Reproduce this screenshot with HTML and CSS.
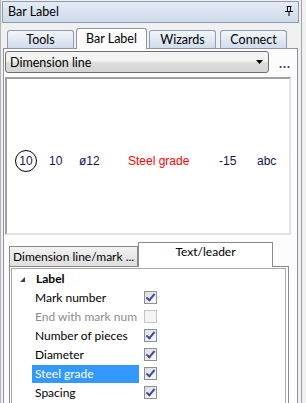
FILE: index.html
```html
<!DOCTYPE html>
<html lang="en">
<head>
    <meta charset="UTF-8">
    <title>Bar Label</title>
    <link rel="stylesheet" href="styles.css">
</head>
<body>
    <div class="window">
        <div class="titlebar">
            <span>Bar Label</span>
            <svg class="pin" width="8" height="10" viewBox="0 0 8 10">
                <path d="M1.5 0.5h5M2.5 0.5v5M5.5 0.5v5M0 5.5h8M4 5.5v4.5" stroke="#000" stroke-width="1" fill="none"/>
                <rect x="2" y="0" width="1" height="5" fill="#000"/>
            </svg>
        </div>

        <div class="tabs">
            <div class="tab">Tools</div>
            <div class="tab active">Bar Label</div>
            <div class="tab">Wizards</div>
            <div class="tab">Connect</div>
        </div>

        <div class="panel">
            <div class="combo-row">
                <div class="combo">
                    <span>Dimension line</span>
                    <svg width="7" height="4" viewBox="0 0 7 4"><path d="M0 0h7L3.5 4z" fill="#000"/></svg>
                </div>
                <span class="more">...</span>
            </div>

            <div class="preview">
                <div class="preview-row">
                    <span class="mark">10</span>
                    <span>10</span>
                    <span>ø12</span>
                    <span class="grade">Steel grade</span>
                    <span>-15</span>
                    <span>abc</span>
                </div>
            </div>

            <div class="subtabs">
                <div class="subtab">Dimension line/mark ...</div>
                <div class="subtab active">Text/leader</div>
            </div>

            <div class="grid">
                <div class="grid-inner">
                    <div class="row group">
                        <svg class="expander" width="5" height="5" viewBox="0 0 5 5"><path d="M5 0V5H0z" fill="#404040"/></svg>
                        <span>Label</span>
                    </div>
                    <div class="row">
                        <span class="name">Mark number</span>
                        <span class="check on"></span>
                    </div>
                    <div class="row disabled">
                        <span class="name">End with mark num</span>
                        <span class="check"></span>
                    </div>
                    <div class="row">
                        <span class="name">Number of pieces</span>
                        <span class="check on"></span>
                    </div>
                    <div class="row">
                        <span class="name">Diameter</span>
                        <span class="check on"></span>
                    </div>
                    <div class="row selected">
                        <span class="name">Steel grade</span>
                        <span class="check on"></span>
                    </div>
                    <div class="row">
                        <span class="name">Spacing</span>
                        <span class="check on"></span>
                    </div>
                </div>
            </div>
        </div>
    </div>
</body>
</html>
```

FILE: styles.css
```css
body {
    margin: 0;
    background: #f0f0f0;
    font-family: Lato, 'Noto Sans', sans-serif;
    font-size: 12.5px;
    color: #000;
    overflow: hidden;
}

.window {
    width: 302px;
    height: 403px;
    border-left: 1px solid #b4b4b4;
    border-right: 1px solid #a0a0a0;
    box-sizing: border-box;
    padding-top: 1px;
}

.titlebar {
    display: flex;
    align-items: center;
    justify-content: space-between;
    width: 297px;
    height: 22px;
    margin-left: 1px;
    padding: 0 5px 0 5px;
    box-sizing: border-box;
    border: 1px solid #8a9bb5;
    background: linear-gradient(#e4ebf5, #cedaea);
}

.titlebar span {
    margin-top: -1px;
}

.pin {
    margin-top: -3px;
}

/* top tab strip */
.tabs {
    display: flex;
    align-items: flex-end;
    gap: 4px;
    height: 21px;
    margin-top: 4px;
    padding-left: 6px;
}

.tab {
    width: 67px;
    height: 18px;
    box-sizing: border-box;
    border: 1px solid #8e9db3;
    border-bottom: none;
    border-radius: 3px 3px 0 0;
    background: linear-gradient(#f3f6fa, #cfdcec);
    text-align: center;
    line-height: 18px;
}

.tab.active {
    height: 21px;
    width: 71px;
    margin: 0 -2px -1px;
    background: #fcfcfc;
    border-color: #8c96a5;
    line-height: 19px;
    position: relative;
    z-index: 1;
}

.panel {
    width: 295px;
    height: 360px;
    margin-left: 2px;
    box-sizing: border-box;
    border: 1px solid #8c96a5;
    border-bottom: none;
    background: #fcfcfc;
    padding: 2px 0 0 1px;
}

.combo-row {
    display: flex;
    align-items: center;
}

.combo {
    display: flex;
    align-items: center;
    justify-content: space-between;
    width: 264px;
    height: 22px;
    box-sizing: border-box;
    padding: 0 5px 0 4px;
    border: 1px solid #707070;
    border-radius: 3px;
    background: linear-gradient(#f3f3f3 45%, #dcdcdc 55%, #d5d5d5);
}

.more {
    margin-left: 10px;
    color: #1c3c80;
    font-weight: bold;
    letter-spacing: 1px;
    margin-top: 3px;
}

/* sunken preview */
.preview {
    width: 286px;
    height: 158px;
    margin-top: 4px;
    box-sizing: border-box;
    border: 2px solid;
    border-color: #a0a0a0 #e3e3e3 #e3e3e3 #a0a0a0;
    background: #fff;
    display: flex;
    align-items: center;
    padding-top: 10px;
}

.preview-row {
    display: grid;
    grid-template-columns: 34px 30px 49px 91px 38px auto;
    align-items: center;
    padding-left: 8px;
    font-family: 'Liberation Sans', Arial, sans-serif;
    font-size: 12px;
    color: #14144a;
}

.preview-row .mark {
    width: 22px;
    height: 22px;
    box-sizing: border-box;
    border: 1px solid #000;
    border-radius: 50%;
    display: flex;
    align-items: center;
    justify-content: center;
}

.preview-row .grade {
    color: #ff0000;
}

/* lower tabs */
.subtabs {
    display: flex;
    align-items: flex-end;
    height: 24px;
    margin-top: 7px;
    padding-left: 4px;
    font-size: 12px;
}

.subtab {
    width: 129px;
    height: 20px;
    box-sizing: border-box;
    border: 1px solid #8a8a8a;
    border-bottom: none;
    background: linear-gradient(#f2f2f2, #dedede);
    padding-left: 3px;
    line-height: 19px;
    white-space: nowrap;
}

.subtab.active {
    width: 135px;
    height: 25px;
    background: #fff;
    text-align: center;
    padding-left: 0;
    line-height: 18px;
    margin-bottom: -1px;
    position: relative;
    z-index: 1;
}

.grid {
    width: 280px;
    height: 150px;
    margin-left: 4px;
    box-sizing: border-box;
    border: 1px solid #8a8a8a;
    border-bottom: none;
    padding: 1px 2px 0 1px;
    background: #fff;
    font-size: 12px;
}

.grid-inner {
    height: 100%;
    box-sizing: border-box;
    border: 1px solid #a8a8a8;
    border-bottom: none;
}

.row {
    display: flex;
    align-items: center;
    height: 19px;
    padding-left: 20px;
}

.row.group {
    padding-left: 8px;
    font-weight: bold;
}

.expander {
    margin-right: 11px;
    margin-top: 1px;
}

.name {
    width: 107px;
    height: 18px;
    line-height: 18px;
    padding-left: 3px;
    box-sizing: border-box;
    white-space: nowrap;
}

.row.selected .name {
    background: #3399ff;
    color: #fff;
}

.row.disabled .name {
    color: #8d8d8d;
}

.check {
    width: 13px;
    height: 13px;
    margin-left: 5px;
    box-sizing: border-box;
    border: 1px solid #8f8f8f;
    background: linear-gradient(135deg, #dcdcdc, #fbfbfb);
    position: relative;
}

.row.disabled .check {
    border-color: #c4c4c4;
    background: #f4f4f4;
}

.check.on::after {
    content: '';
    position: absolute;
    left: 3px;
    top: 0;
    width: 3px;
    height: 7px;
    border: solid #3c4f9c;
    border-width: 0 2px 2px 0;
    transform: rotate(40deg);
}
```
